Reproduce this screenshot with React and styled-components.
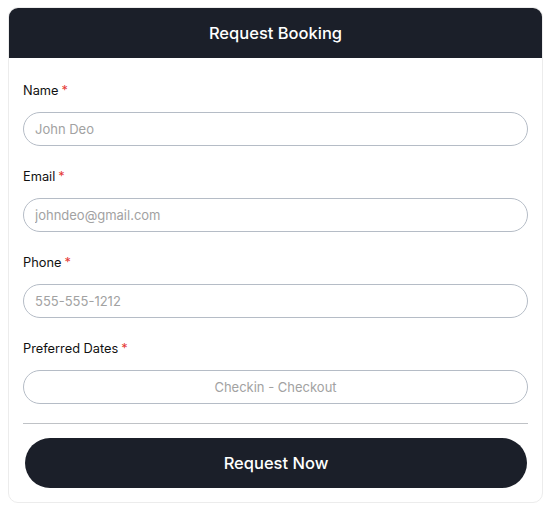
import styled, { createGlobalStyle } from "styled-components";

const GlobalStyle = createGlobalStyle`
  body {
    margin: 0;
    background: #ffffff;
    font-family: "Inter", "Open Sans", sans-serif;
  }
`;

const Page = styled.div`
  padding: 7px 8px;
`;

const Card = styled.div`
  width: 535px;
  box-sizing: border-box;
  border: 1px solid #ececec;
  border-radius: 10px;
  overflow: hidden;
  background: #fff;
`;

const Header = styled.div`
  background: #1b1f29;
  color: #fff;
  height: 51px;
  display: flex;
  align-items: center;
  justify-content: center;
  font-size: 16.5px;
  font-weight: 500;
  margin: -1px -1px 0;
`;

const Body = styled.form`
  padding: 23px 14px 14px;
  display: flex;
  flex-direction: column;
`;

const Field = styled.div`
  display: flex;
  flex-direction: column;
  margin-bottom: ${(p) => (p.$last ? "19px" : "21px")};
`;

const Label = styled.label`
  font-size: 12.8px;
  line-height: 20px;
  color: #111;
  margin-bottom: 11px;
`;

const Star = styled.span`
  color: #e53935;
  margin-left: 3px;
`;

const Input = styled.input`
  height: 34px;
  box-sizing: border-box;
  border: 1px solid #b5bcc6;
  border-radius: 17px;
  padding: 0 11px;
  font-family: inherit;
  font-size: 13px;
  color: #333;
  text-align: ${(p) => (p.$center ? "center" : "left")};
  outline: none;
  &::placeholder {
    color: #a2a2a2;
  }
`;

const Divider = styled.hr`
  border: 0;
  border-top: 1px solid #bfc2c6;
  margin: 0 0 14px;
`;

const Button = styled.button`
  height: 50px;
  margin: 0 1px 0 2px;
  border: 0;
  border-radius: 25px;
  background: #1b1f29;
  color: #fff;
  font-family: inherit;
  font-size: 16.5px;
  font-weight: 500;
`;

const fields = [
  { label: "Name", placeholder: "John Deo" },
  { label: "Email", placeholder: "johndeo@gmail.com" },
  { label: "Phone", placeholder: "555-555-1212" },
  { label: "Preferred Dates", placeholder: "Checkin - Checkout", center: true },
];

export default function App() {
  return (
    <Page>
      <GlobalStyle />
      <Card>
        <Header>Request Booking</Header>
        <Body onSubmit={(e) => e.preventDefault()}>
          {fields.map((f, i) => (
            <Field key={f.label} $last={i === fields.length - 1}>
              <Label>
                {f.label}
                <Star>*</Star>
              </Label>
              <Input placeholder={f.placeholder} $center={f.center} />
            </Field>
          ))}
          <Divider />
          <Button type="submit">Request Now</Button>
        </Body>
      </Card>
    </Page>
  );
}
